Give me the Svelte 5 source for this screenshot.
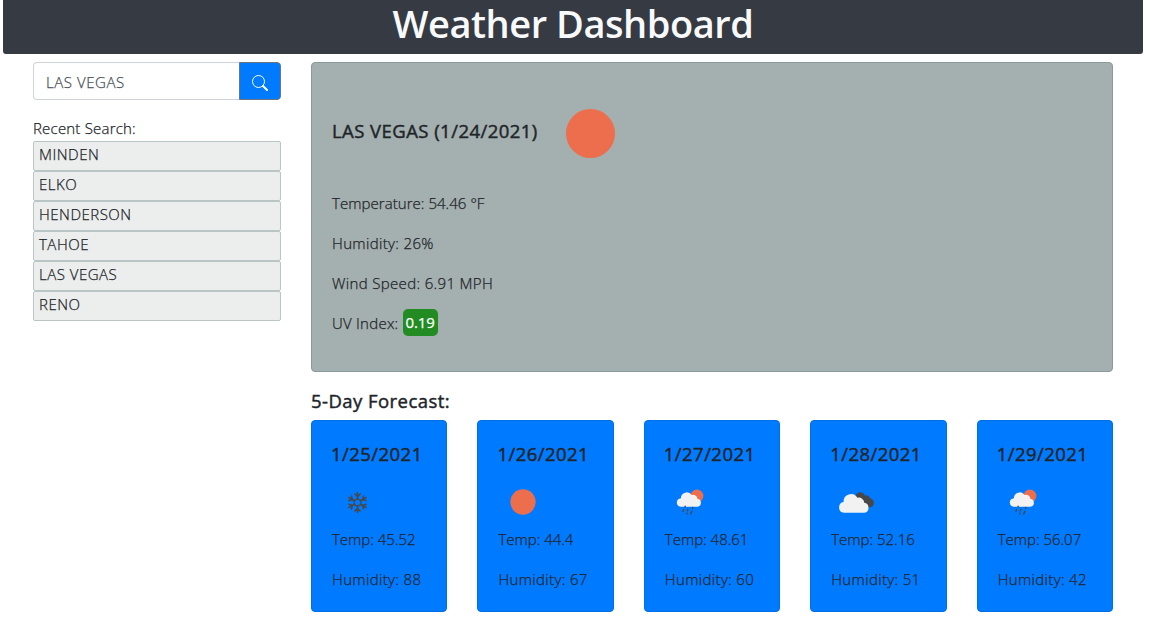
<script>
  let city = $state('LAS VEGAS');
  const recent = ['MINDEN', 'ELKO', 'HENDERSON', 'TAHOE', 'LAS VEGAS', 'RENO'];
  const days = [
    { date: '1/25/2021', icon: 'snow', temp: '45.52', humidity: 88 },
    { date: '1/26/2021', icon: 'clear', temp: '44.4', humidity: 67 },
    { date: '1/27/2021', icon: 'rain', temp: '48.61', humidity: 60 },
    { date: '1/28/2021', icon: 'clouds', temp: '52.16', humidity: 51 },
    { date: '1/29/2021', icon: 'rain', temp: '56.07', humidity: 42 }
  ];
</script>

<div class="page">
  <header><h1>Weather Dashboard</h1></header>
  <main>
    <aside>
      <div class="search">
        <input bind:value={city} aria-label="City" />
        <button aria-label="Search">
          <svg width="16" height="16" viewBox="0 0 16 16" fill="none" stroke="#fff">
            <circle cx="6.5" cy="6.5" r="6" />
            <path d="M11 11l4 4" stroke-width="2" stroke-linecap="round" />
          </svg>
        </button>
      </div>
      <div class="label">Recent Search:</div>
      <ul>
        {#each recent as name}<li>{name}</li>{/each}
      </ul>
    </aside>
    <section>
      <div class="current">
        <div class="top">
          <h2>LAS VEGAS (1/24/2021)</h2>
          <svg width="100" height="100" viewBox="0 0 100 100"><circle cx="49.5" cy="50.5" r="24.5" fill="#ec6e4c" /></svg>
        </div>
        <p class="temperature">Temperature: 54.46 °F</p>
        <p>Humidity: 26%</p>
        <p>Wind Speed: 6.91 MPH</p>
        <p class="index">UV Index: <span class="uv">0.19</span></p>
      </div>
      <h2 class="title">5-Day Forecast:</h2>
      <div class="forecast">
        {#each days as day}
          <article>
            <h2>{day.date}</h2>
            <svg width="50" height="50" viewBox="0 0 50 50">
              {#if day.icon === 'snow'}
                <g stroke="#484848" stroke-width="1.5" fill="none">
                  {#each [0, 60, 120, 180, 240, 300] as angle}
                    <path transform="rotate({angle} 25.5 25.5)" d="M25.5 23V15M22.5 16.6l3 3.2 3-3.2" />
                  {/each}
                  <path d="M25.5 21.5l3.4 2v4l-3.4 2-3.4-2v-4z" stroke-width="1.2" />
                </g>
              {:else if day.icon === 'clear'}
                <circle cx="25" cy="25" r="12.7" fill="#ec6e4c" />
              {:else if day.icon === 'rain'}
                <circle cx="31.9" cy="19" r="6.5" fill="#ec6e4c" />
                <path fill="#f2f2f2" d="M16.3 29.8a4.3 4.3 0 0 1-.4-8.6 5.9 5.9 0 0 1 10.8-3.2 4.4 4.4 0 0 1 5.7 3.7 4.1 4.1 0 0 1 .1 8.1z" />
                <path stroke="#484848" stroke-width="1.4" stroke-linecap="round" d="M20.1 29.2v.7M27.6 30.5v1.1M18.6 32.8l-.6 1.5M22.9 32.3l-.6 1.5M26.9 34.3l-.6 1.5M22 36.2l-.3.7M26 36.2l-.3.7" />
              {:else}
                <path fill="#484848" d="M24.5 20a4.9 4.9 0 0 1 8.4-3.3 4.6 4.6 0 0 1 1 2 3.6 3.6 0 0 1 5 2.6 4.5 4.5 0 0 1 1.2 8.6c-2.5 1-4.6-.4-6.6-.4z" />
                <path fill="#f2f2f2" d="M13 35.8a5.4 5.4 0 0 1-.4-10.7 7.4 7.4 0 0 1 13.8-4.3 5.5 5.5 0 0 1 6.9 5 5.1 5.1 0 0 1 .2 10z" />
              {/if}
            </svg>
            <p>Temp: {day.temp}</p>
            <p class="humidity">Humidity: {day.humidity}</p>
          </article>
        {/each}
      </div>
    </section>
  </main>
</div>

<style>
  :global(body) { margin: 0; background: #fff; }
  .page {
    box-sizing: border-box;
    width: 1149px;
    height: 636px;
    overflow: hidden;
    padding: 0 6px 0 3px;
    font: 300 15px/24px 'Open Sans', 'Noto Sans', sans-serif;
    color: #212529;
    -webkit-text-stroke: 0.25px;
  }
  h1, h2, p, ul { margin: 0; padding: 0; }
  header {
    height: 54px;
    border-radius: 0 0 3px 3px;
    background: #363a43;
    text-align: center;
    color: #f8f9fa;
  }
  h1 { font-size: 38px; line-height: 47px; font-weight: 600; letter-spacing: -0.45px; -webkit-text-stroke: 0; }
  h2 { font-size: 18.5px; line-height: 24px; font-weight: 400; -webkit-text-stroke: 0.45px; letter-spacing: 0.45px; }
  main { display: flex; gap: 30px; padding: 8px 30px 0; }
  aside { width: 248px; flex: none; }
  .search { display: flex; height: 38px; }
  input {
    box-sizing: border-box;
    width: 206px;
    border: 1px solid #ced4da;
    border-right: 0;
    border-radius: 4px 0 0 4px;
    padding: 2px 12px 0;
    font: inherit;
    letter-spacing: 0.55px;
    color: #495057;
    outline: 0;
  }
  button {
    width: 42px;
    display: grid;
    place-items: center;
    padding: 3px 0 0;
    border: 1px solid #6c757d;
    border-radius: 0 4px 4px 0;
    background: #007bff;
  }
  .label { margin-top: 16px; letter-spacing: 0.2px; }
  ul { margin-top: 1px; list-style: none; }
  li {
    box-sizing: border-box;
    height: 30px;
    padding: 0 5px;
    border: 1px solid #bac6c5;
    border-radius: 2px;
    background: #eceeed;
    letter-spacing: 0.5px;
  }
  section { flex: 1; }
  .current {
    box-sizing: border-box;
    height: 310px;
    padding: 20px;
    border: 1px solid #8b9a99;
    border-radius: 4px;
    background: #a4afaf;
  }
  .top { display: flex; height: 108px; }
  .top h2 { width: 209px; margin-top: 36px; white-space: nowrap; }
  .top svg { flex: none; }
  p { margin-bottom: 16px; white-space: nowrap; }
  .current p { letter-spacing: 0.35px; }
  .current .temperature { letter-spacing: 0.05px; }
  .current .index { letter-spacing: 0.25px; }
  .uv { display: inline-block; padding: 1px 3px 2px; border-radius: 5px; background: #228b22; color: #fff; font-weight: 400; margin: -3px 0 -1px; line-height: 24px; letter-spacing: -0.15px; position: relative; top: -1px; }
  .title { margin: 17px 0 7px; }
  .forecast { display: flex; gap: 30px; }
  article {
    flex: 1;
    box-sizing: border-box;
    height: 192px;
    min-width: 0;
    padding: 21px 20px;
    border: 1px solid #006fe6;
    border-radius: 4px;
    background: #007bff;
  }
  article h2 { margin-left: -1px; }
  article svg { display: block; margin: 11px 0 0; }
  .humidity { letter-spacing: 0.35px; }
</style>
